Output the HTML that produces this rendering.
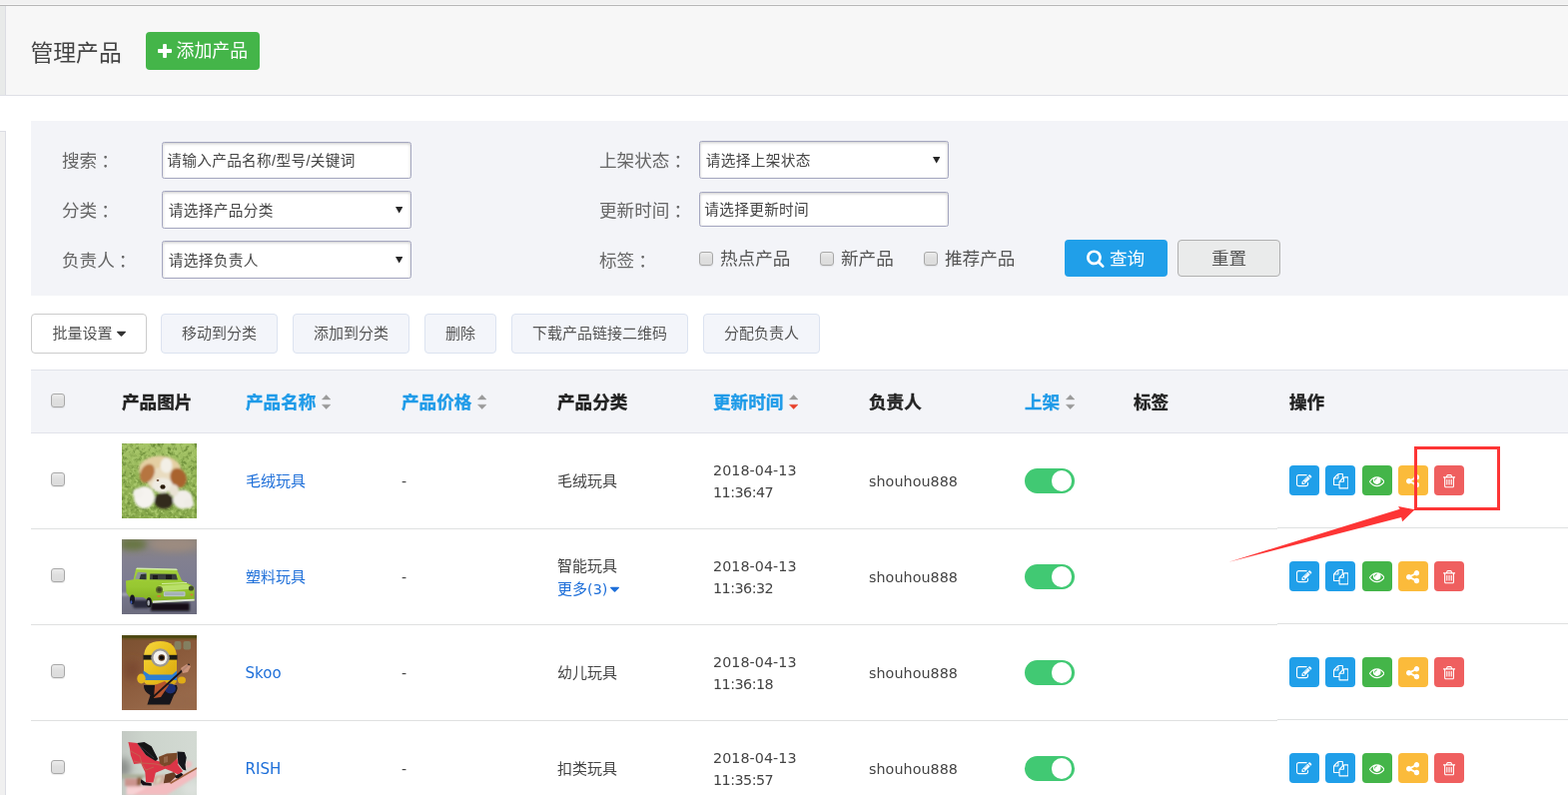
<!DOCTYPE html>
<html lang="zh-CN">
<head>
<meta charset="utf-8">
<title>管理产品</title>
<style>
*{box-sizing:border-box;margin:0;padding:0}
html,body{width:1570px;height:796px;overflow:hidden;background:#fff}
body{position:relative;will-change:transform;font-family:"Liberation Sans","Noto Sans CJK SC",sans-serif;color:#444;font-size:15px}
.abs{position:absolute}
svg{display:block}
/* chrome strips */
#topstrip{left:0;top:0;width:1570px;height:6px;background:linear-gradient(#f1f1f1 0,#f1f1f1 3.8px,#f7f7f7 3.8px,#f7f7f7 4.6px,#b7b7b7 4.8px,#b7b7b7 5.7px,#e4e4e4 6px)}
#lstrip1{left:0;top:6px;width:6px;height:89px;background:#e8eae9;border-right:1px solid #dcdde3}
#header{left:6px;top:6px;width:1564px;height:89px;background:#f7f7f7}
#hline{left:0;top:95px;width:1570px;height:1px;background:#dfe0e6}
#lstrip2{left:0;top:131px;width:6px;height:665px;background:#f0f0f0;border-right:1px solid #dcdde4;border-top:1px solid #dcdde4}
#title{left:30.5px;top:36.5px;font-size:22.8px;line-height:32px;color:#444;white-space:nowrap;font-weight:400}
#addbtn{left:146px;top:32px;width:114px;height:38px;background:#44b549;border-radius:4px;color:#fff;font-size:17.6px;line-height:38px;white-space:nowrap}
#addbtn svg{position:absolute;left:12px;top:9.5px}
#addbtn span{position:absolute;left:30.5px;top:0;font-size:17.9px}
/* filter */
#filter{left:31px;top:121px;width:1539px;height:175px;background:#f3f4f8}
.lab{font-size:17.6px;line-height:24px;color:#666;white-space:nowrap}
.inp{background:#fff;border:1px solid #a5a7c0;border-radius:2.5px;box-shadow:inset 0 1px 3px rgba(0,0,0,.22);font-size:14.67px;letter-spacing:.33px;color:#444;white-space:nowrap;padding-left:4.2px;padding-top:.8px}
.sel{background:#fff;border:1px solid #a5a7c0;border-radius:2.5px;box-shadow:inset 0 1px 3px rgba(0,0,0,.22);font-size:14.67px;letter-spacing:.33px;color:#444;white-space:nowrap;padding-left:5.8px;padding-top:.8px}
.sel svg{position:absolute;left:232.7px;top:15px}
.cn{position:relative;left:4px}
.cb{width:14px;height:14px;border:1px solid #a8a8a8;border-radius:3px;background:linear-gradient(#ececec,#dfdfdf 45%,#dcdcdc);box-shadow:0 1px 1px rgba(0,0,0,.08)}
.cblab{font-size:17.6px;line-height:24px;color:#555;white-space:nowrap}
#qbtn{left:1066px;top:240px;width:103px;height:37px;background:#209fe9;border-radius:4px;color:#fff;font-size:17.6px;line-height:37px}
#rbtn{left:1179px;top:240px;width:103px;height:37px;background:#eaebeb;border:1px solid #b0b0b0;border-radius:4px;color:#555;font-size:17.6px;line-height:37px;text-align:center}
/* toolbar */
.tb{top:314px;height:40px;border:1px solid #dce3f0;border-radius:4px;background:#f3f5fa;color:#555;font-size:15px;line-height:38px;text-align:center;white-space:nowrap}
.tb.w{background:#fff;border-color:#ccc}
/* table */
#thead{left:31px;top:370px;width:1539px;height:64px;background:#f3f4f8;border-top:1px solid #e1e3ea;border-bottom:1px solid #e1e3ea}
.th{top:390px;font-size:17.6px;line-height:26px;font-weight:700;color:#222;white-space:nowrap;-webkit-text-stroke:.35px currentColor}
.th.b{color:#1f9be8}
.sort{top:395px}
.rowline{left:31px;width:1539px;height:1px;background:#dfe1e1}
.td{font-size:15px;line-height:22px;color:#444;white-space:nowrap}
.lat{font-family:"DejaVu Sans","Noto Sans CJK SC",sans-serif;font-size:14.3px;letter-spacing:.05px;color:#444}
a.lk{color:#1e6fd9;text-decoration:none}
.sw{width:50px;height:25px;border-radius:13px;background:#41c973}
.sw b{position:absolute;right:2.6px;top:2.3px;width:20.5px;height:20.5px;border-radius:50%;background:#fff}
.ab{width:30px;height:30px;border-radius:4px}
.ab svg{position:absolute}
.c1{background:#209fe9}.c3{background:#44b549}.c4{background:#fbbb3b}.c5{background:#ef5f5f}
</style>
</head>
<body>
<div id="topstrip" class="abs"></div>
<div id="lstrip1" class="abs"></div>
<div id="header" class="abs"></div>
<div id="hline" class="abs"></div>
<div id="lstrip2" class="abs"></div>
<h1 id="title" class="abs">管理产品</h1>
<div id="addbtn" class="abs"><svg width="14" height="18" viewBox="0 0 1408 1792"><path fill="#fff" d="M1408 800v192q0 40-28 68t-68 28h-416v416q0 40-28 68t-68 28h-192q-40 0-68-28t-28-68v-416h-416q-40 0-68-28t-28-68v-192q0-40 28-68t68-28h416v-416q0-40 28-68t68-28h192q40 0 68 28t28 68v416h416q40 0 68 28t28 68z"/></svg><span>添加产品</span></div>

<div id="filter" class="abs"></div>
<div class="abs lab" style="left:62px;top:149px">搜索<span class="cn">：</span></div>
<div class="abs lab" style="left:62px;top:199px">分类<span class="cn">：</span></div>
<div class="abs lab" style="left:62px;top:249px">负责人<span class="cn">：</span></div>
<div class="abs inp" style="left:162px;top:142px;width:250px;height:37px;line-height:35px">请输入产品名称/型号/关键词</div>
<div class="abs sel" style="left:162px;top:191px;width:250px;height:38px;line-height:36px">请选择产品分类<svg width="7.4" height="6.6" viewBox="0 0 7.4 6.6"><path fill="#262626" d="M0 0h7.4L3.700 6.600z"/></svg></div>
<div class="abs sel" style="left:162px;top:241px;width:250px;height:38px;line-height:36px">请选择负责人<svg width="7.4" height="6.6" viewBox="0 0 7.4 6.6"><path fill="#262626" d="M0 0h7.4L3.700 6.600z"/></svg></div>
<div class="abs lab" style="left:600px;top:149px">上架状态<span class="cn">：</span></div>
<div class="abs lab" style="left:600px;top:199px">更新时间<span class="cn">：</span></div>
<div class="abs lab" style="left:600px;top:249px">标签<span class="cn">：</span></div>
<div class="abs sel" style="left:700px;top:141px;width:250px;height:38px;line-height:36px">请选择上架状态<svg width="7.4" height="6.6" viewBox="0 0 7.4 6.6"><path fill="#262626" d="M0 0h7.4L3.700 6.600z"/></svg></div>
<div class="abs inp" style="left:700px;top:192px;width:250px;height:35px;line-height:33px">请选择更新时间</div>
<div class="abs cb" style="left:700px;top:252px"></div><div class="abs cblab" style="left:721px;top:247px">热点产品</div>
<div class="abs cb" style="left:821px;top:252px"></div><div class="abs cblab" style="left:842px;top:247px">新产品</div>
<div class="abs cb" style="left:925px;top:252px"></div><div class="abs cblab" style="left:946px;top:247px">推荐产品</div>
<div id="qbtn" class="abs"><svg class="abs" style="left:22px;top:8.5px" width="17.6" height="19" viewBox="0 0 1664 1792"><path fill="#fff" d="M1152 832q0-185-131.500-316.500t-316.500-131.500-316.500 131.500-131.500 316.500 131.500 316.500 316.500 131.500 316.500-131.500 131.500-316.500zM1664 1664q0 52-38 90t-90 38q-54 0-90-38l-343-342q-179 124-399 124-143 0-273.500-55.500t-225-150-150-225-55.500-273.500 55.500-273.500 150-225 225-150 273.500-55.500 273.500 55.500 225 150 150 225 55.500 273.500q0 220-124 399l343 343q37 37 37 90z"/></svg><span class="abs" style="left:45px;top:.5px">查询</span></div>
<div id="rbtn" class="abs">重置</div>

<div class="abs tb w" style="left:31px;width:116px">批量设置<svg style="display:inline-block;vertical-align:middle;margin-left:4px;margin-top:-3px" width="9" height="16" viewBox="0 0 1024 1792"><path fill="#333" d="M1024 704q0 26-19 45l-448 448q-19 19-45 19t-45-19l-448-448q-19-19-19-45t19-45 45-19h896q26 0 45 19t19 45z"/></svg></div>
<div class="abs tb" style="left:161px;width:117px">移动到分类</div>
<div class="abs tb" style="left:293px;width:117px">添加到分类</div>
<div class="abs tb" style="left:425px;width:72px">删除</div>
<div class="abs tb" style="left:512px;width:177px">下载产品链接二维码</div>
<div class="abs tb" style="left:704px;width:117px">分配负责人</div>

<!--TABLE-->
<!--TSTART-->
<div id="thead" class="abs"></div>
<div class="abs cb" style="left:51px;top:394px"></div>
<div class="abs th" style="left:122px">产品图片</div>
<div class="abs th b" style="left:246px">产品名称</div>
<svg class="abs" style="left:321.8px;top:395px" width="9.4" height="15" viewBox="0 0 9.4 15"><path fill="#9a9a9a" stroke="#9a9a9a" stroke-width=".5" stroke-linejoin="round" d="M.5 4.900L4.700.500l4.200 4.400z"/><path fill="#9a9a9a" stroke="#9a9a9a" stroke-width=".5" stroke-linejoin="round" d="M.5 10.200l4.200 4.400 4.200-4.400z"/></svg>
<div class="abs th b" style="left:402px">产品价格</div>
<svg class="abs" style="left:477.8px;top:395px" width="9.4" height="15" viewBox="0 0 9.4 15"><path fill="#9a9a9a" stroke="#9a9a9a" stroke-width=".5" stroke-linejoin="round" d="M.5 4.900L4.700.500l4.200 4.400z"/><path fill="#9a9a9a" stroke="#9a9a9a" stroke-width=".5" stroke-linejoin="round" d="M.5 10.200l4.200 4.400 4.200-4.400z"/></svg>
<div class="abs th" style="left:558px">产品分类</div>
<div class="abs th b" style="left:714px">更新时间</div>
<svg class="abs" style="left:789.8px;top:395px" width="9.4" height="15" viewBox="0 0 9.4 15"><path fill="#9a9a9a" stroke="#9a9a9a" stroke-width=".5" stroke-linejoin="round" d="M.5 4.900L4.700.500l4.200 4.400z"/><path fill="#e8402a" stroke="#e8402a" stroke-width=".5" stroke-linejoin="round" d="M.5 10.200l4.200 4.400 4.200-4.400z"/></svg>
<div class="abs th" style="left:870px">负责人</div>
<div class="abs th b" style="left:1026px">上架</div>
<svg class="abs" style="left:1066.8px;top:395px" width="9.4" height="15" viewBox="0 0 9.4 15"><path fill="#9a9a9a" stroke="#9a9a9a" stroke-width=".5" stroke-linejoin="round" d="M.5 4.900L4.700.500l4.200 4.400z"/><path fill="#9a9a9a" stroke="#9a9a9a" stroke-width=".5" stroke-linejoin="round" d="M.5 10.200l4.200 4.400 4.200-4.400z"/></svg>
<div class="abs th" style="left:1135px">标签</div>
<div class="abs th" style="left:1291px">操作</div>
<div class="abs cb" style="left:51px;top:473.4px"></div>
<!--IMG0--><!--IS--><svg class="abs" style="left:122px;top:444px" width="75" height="75" viewBox="0 0 75 75"><defs><filter id="b1" x="-20%" y="-20%" width="140%" height="140%"><feGaussianBlur stdDeviation="0.9"/></filter><filter id="b2" x="-20%" y="-20%" width="140%" height="140%"><feGaussianBlur stdDeviation="0.6"/></filter><filter id="gn" color-interpolation-filters="sRGB" x="0" y="0" width="100%" height="100%"><feTurbulence type="fractalNoise" baseFrequency="0.22" numOctaves="3" seed="7"/><feColorMatrix values="0 0 0 0 0.42  0 0 0 0 0.55  0 0 0 0 0.22  3.4 0 0 0 -1.55"/></filter><filter id="gl" color-interpolation-filters="sRGB" x="0" y="0" width="100%" height="100%"><feTurbulence type="fractalNoise" baseFrequency="0.3" numOctaves="2" seed="21"/><feColorMatrix values="0 0 0 0 0.66  0 0 0 0 0.78  0 0 0 0 0.42  0 4 0 0 -1.9"/></filter><linearGradient id="gg" x1="0" y1="0" x2="0" y2="1"><stop offset="0" stop-color="#a6c568"/><stop offset=".45" stop-color="#93b456"/><stop offset="1" stop-color="#88aa4c"/></linearGradient><clipPath id="cp1"><rect width="75" height="75"/></clipPath></defs>
<g clip-path="url(#cp1)"><rect width="75" height="75" fill="url(#gg)"/><rect width="75" height="75" filter="url(#gn)"/><rect width="75" height="75" filter="url(#gl)"/>
<g filter="url(#b1)"><ellipse cx="42" cy="57.5" rx="9.5" ry="8" fill="#332a1b"/><ellipse cx="38" cy="26" rx="21" ry="13.5" fill="#e4cfa3"/><ellipse cx="40" cy="36" rx="15" ry="12" fill="#e9dcc0"/><ellipse cx="44.5" cy="22" rx="6" ry="7.5" fill="#f3efe6"/><ellipse cx="25.5" cy="30" rx="6.8" ry="9.8" fill="#b6743f" transform="rotate(25 25.5 30)"/><ellipse cx="56.5" cy="34.5" rx="8" ry="10" fill="#a9642f" transform="rotate(-20 56.5 34.5)"/><ellipse cx="40.5" cy="42" rx="10.5" ry="7.5" fill="#efebe2"/><ellipse cx="22.5" cy="54" rx="10.5" ry="11" fill="#f5f3ef"/><ellipse cx="16" cy="50" rx="5" ry="5" fill="#f3f1ec"/><ellipse cx="61" cy="56" rx="10" ry="9.5" fill="#f1eee9"/><ellipse cx="67" cy="60" rx="5" ry="5" fill="#efece6"/><ellipse cx="52" cy="47" rx="5" ry="6" fill="#e9e2d4"/></g>
<g filter="url(#b2)"><ellipse cx="41" cy="43.5" rx="2.6" ry="2.2" fill="#2b1a10"/><ellipse cx="36" cy="37" rx="1.3" ry="1" fill="#6b4a30"/></g></g></svg><!--IE-->
<a class="abs td lk" style="left:246px;top:470.5px">毛绒玩具</a>
<div class="abs td lat" style="left:402px;top:470.5px">-</div>
<div class="abs td" style="left:558px;top:470.5px">毛绒玩具</div>
<div class="abs td lat" style="left:714px;top:459.5px">2018-04-13<br><span style="letter-spacing:-.5px">11:36:47</span></div>
<div class="abs td lat" style="left:870px;top:470.5px">shouhou888</div>
<div class="abs sw" style="left:1026px;top:469px"><b></b></div>
<div class="abs ab c1" style="left:1291.0px;top:466px"><svg style="left:7.30px;top:8.30px" width="15.40" height="15.4" viewBox="0 0 1792 1792"><path fill="#fff" d="M888 1184l116-116-152-152-116 116v56h96v96h56zM1328 464q-16-16-33 1l-350 350q-17 17-1 33t33-1l350-350q17-17 1-33zM1408 1058v190q0 119-84.500 203.500t-203.500 84.500h-832q-119 0-203.500-84.500t-84.500-203.500v-832q0-119 84.500-203.500t203.500-84.500h832q63 0 117 25 15 7 18 23 3 17-9 29l-49 49q-14 14-32 8-23-6-45-6h-832q-66 0-113 47t-47 113v832q0 66 47 113t113 47h832q66 0 113-47t47-113v-126q0-13 9-22l64-64q15-15 35-7t20 29zM1312 320l288 288-672 672h-288v-288zM1756 452l-92 92-288-288 92-92q28-28 68-28t68 28l152 152q28 28 28 68t-28 68z"/></svg></div>
<div class="abs ab c1" style="left:1327.3px;top:466px"><svg style="left:7.30px;top:8.30px" width="15.40" height="15.4" viewBox="0 0 1792 1792"><path fill="#fff" d="M1696 384q40 0 68 28t28 68v1216q0 40-28 68t-68 28h-960q-40 0-68-28t-28-68v-288h-544q-40 0-68-28t-28-68v-672q0-40 20-88t48-76l408-408q28-28 76-48t88-20h416q40 0 68 28t28 68v328q68-40 128-40h416zM1152 597l-299 299h299v-299zM512 213l-299 299h299v-299zM708 860l316-316v-416h-384v416q0 40-28 68t-68 28h-416v640h512v-256q0-40 20-88t48-76zM1664 1664v-1152h-384v416q0 40-28 68t-68 28h-416v640h896z"/></svg></div>
<div class="abs ab c3" style="left:1363.6px;top:466px"><svg style="left:7.30px;top:8.30px" width="15.40" height="15.4" viewBox="0 0 1792 1792"><path fill="#fff" d="M1664 960q-152-236-381-353 61 104 61 225 0 185-131.500 316.500t-316.500 131.500-316.500-131.500-131.500-316.500q0-121 61-225-229 117-381 353 133 205 333.500 326.500t434.500 121.500 434.500-121.500 333.500-326.500zM944 576q0-20-14-34t-34-14q-125 0-214.500 89.500t-89.500 214.500q0 20 14 34t34 14 34-14 14-34q0-86 61-147t147-61q20 0 34-14t14-34zM1792 960q0 34-20 69-140 230-376.500 368.500t-499.500 138.500-499.500-139-376.500-368q-20-35-20-69t20-69q140-229 376.500-368t499.500-139 499.500 139 376.500 368q20 35 20 69z"/></svg></div>
<div class="abs ab c4" style="left:1399.9px;top:466px"><svg style="left:8.40px;top:8.30px" width="13.20" height="15.4" viewBox="0 0 1536 1792"><path fill="#fff" d="M1216 1024q133 0 226.500 93.500t93.500 226.500-93.500 226.500-226.500 93.500-226.500-93.500-93.500-226.500q0-12 2-34l-360-180q-92 86-218 86-133 0-226.500-93.500t-93.500-226.500 93.500-226.500 226.500-93.500q126 0 218 86l360-180q-2-22-2-34 0-133 93.500-226.500t226.500-93.500 226.500 93.500 93.500 226.500-93.500 226.500-226.500 93.500q-126 0-218-86l-360 180q2 22 2 34t-2 34l360 180q92-86 218-86z"/></svg></div>
<div class="abs ab c5" style="left:1436.2px;top:466px"><svg style="left:8.95px;top:8.30px" width="12.10" height="15.4" viewBox="0 0 1408 1792"><path fill="#fff" d="M512 736v576q0 14-9 23t-23 9h-64q-14 0-23-9t-9-23v-576q0-14 9-23t23-9h64q14 0 23 9t9 23zM768 736v576q0 14-9 23t-23 9h-64q-14 0-23-9t-9-23v-576q0-14 9-23t23-9h64q14 0 23 9t9 23zM1024 736v576q0 14-9 23t-23 9h-64q-14 0-23-9t-9-23v-576q0-14 9-23t23-9h64q14 0 23 9t9 23zM1152 1460v-948h-896v948q0 22 7 40.500t14.500 27 10.500 8.500h832q3 0 10.500-8.500t14.500-27 7-40.500zM480 384h448l-48-117q-7-9-17-11h-317q-10 2-17 11zM1408 416v64q0 14-9 23t-23 9h-96v948q0 83-47 143.500t-113 60.500h-832q-66 0-113-58.500t-47-141.500v-952h-96q-14 0-23-9t-9-23v-64q0-14 9-23t23-9h309l70-167q15-37 54-63t79-26h320q40 0 79 26t54 63l70 167h309q14 0 23 9t9 23z"/></svg></div>
<div class="abs rowline" style="top:529px;width:1248px"></div><div class="abs rowline" style="top:528px;left:1279px;width:291px"></div>
<div class="abs cb" style="left:51px;top:569.4px"></div>
<!--IMG1--><!--IS--><svg class="abs" style="left:122px;top:540px" width="75" height="75" viewBox="0 0 75 75"><defs><filter id="c1" x="-20%" y="-20%" width="140%" height="140%"><feGaussianBlur stdDeviation="0.6"/></filter><filter id="c2" x="-30%" y="-30%" width="160%" height="160%"><feGaussianBlur stdDeviation="3"/></filter><filter id="c3" x="-30%" y="-30%" width="160%" height="160%"><feGaussianBlur stdDeviation="0.9"/></filter><linearGradient id="cg" x1="0" y1="0" x2="0" y2="1"><stop offset="0" stop-color="#8c857b"/><stop offset=".28" stop-color="#828090"/><stop offset=".6" stop-color="#7c7c92"/><stop offset="1" stop-color="#6c6c7e"/></linearGradient><linearGradient id="cb" x1="0" y1="0" x2="0" y2="1"><stop offset="0" stop-color="#a3d03c"/><stop offset=".55" stop-color="#97c730"/><stop offset="1" stop-color="#80ae22"/></linearGradient><clipPath id="cp2"><rect width="75" height="75"/></clipPath></defs>
<g clip-path="url(#cp2)"><rect width="75" height="75" fill="url(#cg)"/><g filter="url(#c2)"><ellipse cx="11" cy="5" rx="14" ry="6" fill="#687643"/><ellipse cx="52" cy="5" rx="24" ry="7" fill="#9c8b80"/></g>
<g filter="url(#c3)"><path d="M28.900 63.600h38.900v8.100h-38.900z" fill="#141117"/><path d="M9 61h17l1 8h-15z" fill="#2c2c3a"/><ellipse cx="3" cy="55" rx="4" ry="1.500" fill="#b9bcc8" opacity=".7"/></g>
<g filter="url(#c1)">
<path d="M14.300 29l40.500 1 5.400 11.400 5.400 2.700q7 2.500 7 5.900v11.400l-41.600 2-3.800-3.600h-3l-3-1.800-13.700-.3-3-4.300-.5-12 7.600-1.100z" fill="url(#cb)"/>
<path d="M15 28.600l39.500 1q1 .3 1.200 1.400l-41.500-1z" fill="#d2ecac"/>
<path d="M37 46.500l28-1.800q5 2 7 4.800l-34.500 2.700z" fill="#b9e068"/><path d="M40 44.500l25-1" stroke="#d6efa6" stroke-width="1" fill="none"/>
<path d="M28.300 34.400l26 .3 1.600 5.700-27.900-.2z" fill="#3a403e"/><path d="M31 36h5v4h-5zM44 35.500h6v4.500h-6z" fill="#1c1f1f"/>
<path d="M15.900 32.800l8.600.5v7l-11.300-.5z" fill="#8e959a"/><path d="M19 35l5.500-.5v5.800l-7-.3z" fill="#2f3534"/><path d="M25.300 33h1.900v8h-1.900z" fill="#a4d13c"/>
<rect x="41.800" y="52.200" width="21.700" height="5" rx="1.200" fill="#b8c4c6"/><rect x="43" y="53.300" width="19.300" height="2.800" rx=".8" fill="#a4b0b6"/>
<circle cx="37.500" cy="50.600" r="3.500" fill="#5b6a2c"/><circle cx="37.500" cy="50.600" r="2" fill="#3c4526"/><circle cx="69.400" cy="49" r="2.600" fill="#3e482a"/>
<path d="M31 61.600l41.600-1.900v1.900l-41.600 2.100z" fill="#dfe3dc"/><rect x="35.500" y="56" width="3.300" height="1.700" fill="#d9743a"/><rect x="68.500" y="54.600" width="2.600" height="1.700" fill="#d9743a"/>
<ellipse cx="27.200" cy="63.200" rx="2.700" ry="5" fill="#14141b"/><ellipse cx="26.700" cy="63.600" rx="1.300" ry="2.800" fill="#a4a8b0"/><ellipse cx="10.500" cy="60.200" rx="2.500" ry="4.800" fill="#181824"/><ellipse cx="9.500" cy="63" rx=".9" ry="1.800" fill="#3a5ab8"/></g></g></svg><!--IE-->
<a class="abs td lk" style="left:246px;top:566.5px">塑料玩具</a>
<div class="abs td lat" style="left:402px;top:566.5px">-</div>
<div class="abs td" style="left:558px;top:556.0px">智能玩具</div>
<a class="abs td lk" style="left:558px;top:578.5px">更多<span class="lat" style="color:inherit">(3)</span><svg style="display:inline-block;vertical-align:middle;margin-left:3px;margin-top:-1px" width="9" height="16" viewBox="0 0 1024 1792"><path fill="#1e6fd9" d="M1024 704q0 26-19 45l-448 448q-19 19-45 19t-45-19l-448-448q-19-19-19-45t19-45 45-19h896q26 0 45 19t19 45z"/></svg></a>
<div class="abs td lat" style="left:714px;top:555.5px">2018-04-13<br><span style="letter-spacing:-.5px">11:36:32</span></div>
<div class="abs td lat" style="left:870px;top:566.5px">shouhou888</div>
<div class="abs sw" style="left:1026px;top:565px"><b></b></div>
<div class="abs ab c1" style="left:1291.0px;top:562px"><svg style="left:7.30px;top:8.30px" width="15.40" height="15.4" viewBox="0 0 1792 1792"><path fill="#fff" d="M888 1184l116-116-152-152-116 116v56h96v96h56zM1328 464q-16-16-33 1l-350 350q-17 17-1 33t33-1l350-350q17-17 1-33zM1408 1058v190q0 119-84.500 203.500t-203.500 84.500h-832q-119 0-203.500-84.500t-84.500-203.500v-832q0-119 84.500-203.500t203.500-84.500h832q63 0 117 25 15 7 18 23 3 17-9 29l-49 49q-14 14-32 8-23-6-45-6h-832q-66 0-113 47t-47 113v832q0 66 47 113t113 47h832q66 0 113-47t47-113v-126q0-13 9-22l64-64q15-15 35-7t20 29zM1312 320l288 288-672 672h-288v-288zM1756 452l-92 92-288-288 92-92q28-28 68-28t68 28l152 152q28 28 28 68t-28 68z"/></svg></div>
<div class="abs ab c1" style="left:1327.3px;top:562px"><svg style="left:7.30px;top:8.30px" width="15.40" height="15.4" viewBox="0 0 1792 1792"><path fill="#fff" d="M1696 384q40 0 68 28t28 68v1216q0 40-28 68t-68 28h-960q-40 0-68-28t-28-68v-288h-544q-40 0-68-28t-28-68v-672q0-40 20-88t48-76l408-408q28-28 76-48t88-20h416q40 0 68 28t28 68v328q68-40 128-40h416zM1152 597l-299 299h299v-299zM512 213l-299 299h299v-299zM708 860l316-316v-416h-384v416q0 40-28 68t-68 28h-416v640h512v-256q0-40 20-88t48-76zM1664 1664v-1152h-384v416q0 40-28 68t-68 28h-416v640h896z"/></svg></div>
<div class="abs ab c3" style="left:1363.6px;top:562px"><svg style="left:7.30px;top:8.30px" width="15.40" height="15.4" viewBox="0 0 1792 1792"><path fill="#fff" d="M1664 960q-152-236-381-353 61 104 61 225 0 185-131.500 316.500t-316.500 131.500-316.500-131.500-131.500-316.500q0-121 61-225-229 117-381 353 133 205 333.500 326.500t434.500 121.500 434.500-121.500 333.500-326.500zM944 576q0-20-14-34t-34-14q-125 0-214.500 89.500t-89.500 214.500q0 20 14 34t34 14 34-14 14-34q0-86 61-147t147-61q20 0 34-14t14-34zM1792 960q0 34-20 69-140 230-376.500 368.500t-499.500 138.500-499.500-139-376.500-368q-20-35-20-69t20-69q140-229 376.500-368t499.500-139 499.500 139 376.500 368q20 35 20 69z"/></svg></div>
<div class="abs ab c4" style="left:1399.9px;top:562px"><svg style="left:8.40px;top:8.30px" width="13.20" height="15.4" viewBox="0 0 1536 1792"><path fill="#fff" d="M1216 1024q133 0 226.500 93.500t93.500 226.500-93.500 226.500-226.500 93.500-226.500-93.500-93.500-226.500q0-12 2-34l-360-180q-92 86-218 86-133 0-226.500-93.500t-93.500-226.500 93.500-226.500 226.500-93.500q126 0 218 86l360-180q-2-22-2-34 0-133 93.500-226.500t226.500-93.500 226.500 93.500 93.500 226.500-93.500 226.500-226.500 93.500q-126 0-218-86l-360 180q2 22 2 34t-2 34l360 180q92-86 218-86z"/></svg></div>
<div class="abs ab c5" style="left:1436.2px;top:562px"><svg style="left:8.95px;top:8.30px" width="12.10" height="15.4" viewBox="0 0 1408 1792"><path fill="#fff" d="M512 736v576q0 14-9 23t-23 9h-64q-14 0-23-9t-9-23v-576q0-14 9-23t23-9h64q14 0 23 9t9 23zM768 736v576q0 14-9 23t-23 9h-64q-14 0-23-9t-9-23v-576q0-14 9-23t23-9h64q14 0 23 9t9 23zM1024 736v576q0 14-9 23t-23 9h-64q-14 0-23-9t-9-23v-576q0-14 9-23t23-9h64q14 0 23 9t9 23zM1152 1460v-948h-896v948q0 22 7 40.500t14.500 27 10.500 8.500h832q3 0 10.500-8.500t14.500-27 7-40.500zM480 384h448l-48-117q-7-9-17-11h-317q-10 2-17 11zM1408 416v64q0 14-9 23t-23 9h-96v948q0 83-47 143.500t-113 60.500h-832q-66 0-113-58.500t-47-141.500v-952h-96q-14 0-23-9t-9-23v-64q0-14 9-23t23-9h309l70-167q15-37 54-63t79-26h320q40 0 79 26t54 63l70 167h309q14 0 23 9t9 23z"/></svg></div>
<div class="abs rowline" style="top:625px;width:1248px"></div><div class="abs rowline" style="top:624px;left:1279px;width:291px"></div>
<div class="abs cb" style="left:51px;top:665.4px"></div>
<!--IMG2--><!--IS--><svg class="abs" style="left:122px;top:636px" width="75" height="75" viewBox="0 0 75 75"><defs><filter id="m1" x="-20%" y="-20%" width="140%" height="140%"><feGaussianBlur stdDeviation="0.6"/></filter><filter id="m2" x="-20%" y="-20%" width="140%" height="140%"><feGaussianBlur stdDeviation="4"/></filter><linearGradient id="mg" x1="0" y1="0" x2=".5" y2="1"><stop offset="0" stop-color="#7a5030"/><stop offset=".5" stop-color="#8a5a3b"/><stop offset="1" stop-color="#98694a"/></linearGradient><linearGradient id="my" x1="0" y1="0" x2="1" y2="1"><stop offset="0" stop-color="#f6d53e"/><stop offset=".5" stop-color="#e9bf1c"/><stop offset="1" stop-color="#d7a715"/></linearGradient><clipPath id="cp3"><rect width="75" height="75"/></clipPath></defs>
<g clip-path="url(#cp3)"><rect width="75" height="75" fill="url(#mg)"/><g filter="url(#m2)"><ellipse cx="10" cy="35" rx="8" ry="10" fill="#7a4a30"/><ellipse cx="55" cy="66" rx="20" ry="7" fill="#95684a"/></g><rect width="75" height="3.200" fill="#4f4a14"/><rect y="3.200" width="75" height="1.500" fill="#6a5220" opacity=".7"/>
<g filter="url(#m1)"><rect x="52.500" y="6" width="7" height="8.500" rx="2" fill="#7f9f80" opacity=".55"/><rect x="61.500" y="6" width="7.500" height="8.500" rx="2" fill="#7f9f80" opacity=".55"/>
<path d="M22 22.500q0-16.500 16.500-16.500t16.500 16.500v22q0 5-5 5h-23q-5 0-5-5z" fill="url(#my)"/>
<rect x="21.500" y="19.800" width="34" height="4.800" fill="#1c1a18"/>
<circle cx="38.500" cy="22.500" r="9.300" fill="#9b9894"/><circle cx="38.500" cy="22.500" r="7" fill="#f4f2ee"/><circle cx="39.800" cy="22.500" r="3.300" fill="#5a3a20"/><circle cx="39.800" cy="22.500" r="2.100" fill="#0c0a0a"/>
<path d="M21.500 35.500l6 4h23l4.500-4v9.500h-33.500z" fill="#2f7fd2"/>
<ellipse cx="19.500" cy="43.500" rx="4.200" ry="5" fill="#e6b61e"/><ellipse cx="60" cy="45" rx="4" ry="3.500" fill="#e0ac18"/>
<path d="M22 50h33q2 5-3 10l-4 9.500h-22.500l3-9.500q-7-4-6.500-10z" fill="#15121a"/><ellipse cx="48.500" cy="53.500" rx="5.500" ry="5" fill="#1f2f72"/>
<path d="M33 50l10-4 4 4-8 12-7 1z" fill="#b5552f"/><path d="M29.500 63.500L67.500 29" stroke="#1c1418" stroke-width="1.700" fill="none"/><path d="M59 33l6-4 4 2-3 6-5 1z" fill="#d9a08a" opacity=".8"/></g></g></svg><!--IE-->
<a class="abs td lk lat" style="left:246px;top:662.5px;font-size:15px;margin-left:-.5px">Skoo</a>
<div class="abs td lat" style="left:402px;top:662.5px">-</div>
<div class="abs td" style="left:558px;top:662.5px">幼儿玩具</div>
<div class="abs td lat" style="left:714px;top:651.5px">2018-04-13<br><span style="letter-spacing:-.5px">11:36:18</span></div>
<div class="abs td lat" style="left:870px;top:662.5px">shouhou888</div>
<div class="abs sw" style="left:1026px;top:661px"><b></b></div>
<div class="abs ab c1" style="left:1291.0px;top:658px"><svg style="left:7.30px;top:8.30px" width="15.40" height="15.4" viewBox="0 0 1792 1792"><path fill="#fff" d="M888 1184l116-116-152-152-116 116v56h96v96h56zM1328 464q-16-16-33 1l-350 350q-17 17-1 33t33-1l350-350q17-17 1-33zM1408 1058v190q0 119-84.500 203.500t-203.500 84.500h-832q-119 0-203.500-84.500t-84.500-203.500v-832q0-119 84.500-203.500t203.500-84.500h832q63 0 117 25 15 7 18 23 3 17-9 29l-49 49q-14 14-32 8-23-6-45-6h-832q-66 0-113 47t-47 113v832q0 66 47 113t113 47h832q66 0 113-47t47-113v-126q0-13 9-22l64-64q15-15 35-7t20 29zM1312 320l288 288-672 672h-288v-288zM1756 452l-92 92-288-288 92-92q28-28 68-28t68 28l152 152q28 28 28 68t-28 68z"/></svg></div>
<div class="abs ab c1" style="left:1327.3px;top:658px"><svg style="left:7.30px;top:8.30px" width="15.40" height="15.4" viewBox="0 0 1792 1792"><path fill="#fff" d="M1696 384q40 0 68 28t28 68v1216q0 40-28 68t-68 28h-960q-40 0-68-28t-28-68v-288h-544q-40 0-68-28t-28-68v-672q0-40 20-88t48-76l408-408q28-28 76-48t88-20h416q40 0 68 28t28 68v328q68-40 128-40h416zM1152 597l-299 299h299v-299zM512 213l-299 299h299v-299zM708 860l316-316v-416h-384v416q0 40-28 68t-68 28h-416v640h512v-256q0-40 20-88t48-76zM1664 1664v-1152h-384v416q0 40-28 68t-68 28h-416v640h896z"/></svg></div>
<div class="abs ab c3" style="left:1363.6px;top:658px"><svg style="left:7.30px;top:8.30px" width="15.40" height="15.4" viewBox="0 0 1792 1792"><path fill="#fff" d="M1664 960q-152-236-381-353 61 104 61 225 0 185-131.500 316.500t-316.500 131.500-316.500-131.500-131.500-316.500q0-121 61-225-229 117-381 353 133 205 333.500 326.500t434.500 121.500 434.500-121.500 333.500-326.500zM944 576q0-20-14-34t-34-14q-125 0-214.500 89.500t-89.500 214.500q0 20 14 34t34 14 34-14 14-34q0-86 61-147t147-61q20 0 34-14t14-34zM1792 960q0 34-20 69-140 230-376.500 368.500t-499.500 138.500-499.500-139-376.500-368q-20-35-20-69t20-69q140-229 376.500-368t499.500-139 499.500 139 376.500 368q20 35 20 69z"/></svg></div>
<div class="abs ab c4" style="left:1399.9px;top:658px"><svg style="left:8.40px;top:8.30px" width="13.20" height="15.4" viewBox="0 0 1536 1792"><path fill="#fff" d="M1216 1024q133 0 226.500 93.500t93.500 226.500-93.500 226.500-226.500 93.500-226.500-93.500-93.500-226.500q0-12 2-34l-360-180q-92 86-218 86-133 0-226.500-93.500t-93.500-226.500 93.500-226.500 226.500-93.500q126 0 218 86l360-180q-2-22-2-34 0-133 93.500-226.500t226.500-93.500 226.500 93.500 93.500 226.500-93.500 226.500-226.500 93.500q-126 0-218-86l-360 180q2 22 2 34t-2 34l360 180q92-86 218-86z"/></svg></div>
<div class="abs ab c5" style="left:1436.2px;top:658px"><svg style="left:8.95px;top:8.30px" width="12.10" height="15.4" viewBox="0 0 1408 1792"><path fill="#fff" d="M512 736v576q0 14-9 23t-23 9h-64q-14 0-23-9t-9-23v-576q0-14 9-23t23-9h64q14 0 23 9t9 23zM768 736v576q0 14-9 23t-23 9h-64q-14 0-23-9t-9-23v-576q0-14 9-23t23-9h64q14 0 23 9t9 23zM1024 736v576q0 14-9 23t-23 9h-64q-14 0-23-9t-9-23v-576q0-14 9-23t23-9h64q14 0 23 9t9 23zM1152 1460v-948h-896v948q0 22 7 40.500t14.500 27 10.500 8.500h832q3 0 10.500-8.500t14.500-27 7-40.500zM480 384h448l-48-117q-7-9-17-11h-317q-10 2-17 11zM1408 416v64q0 14-9 23t-23 9h-96v948q0 83-47 143.500t-113 60.500h-832q-66 0-113-58.500t-47-141.500v-952h-96q-14 0-23-9t-9-23v-64q0-14 9-23t23-9h309l70-167q15-37 54-63t79-26h320q40 0 79 26t54 63l70 167h309q14 0 23 9t9 23z"/></svg></div>
<div class="abs rowline" style="top:721px;width:1248px"></div><div class="abs rowline" style="top:720px;left:1279px;width:291px"></div>
<div class="abs cb" style="left:51px;top:761.4px"></div>
<!--IMG3--><!--IS--><svg class="abs" style="left:122px;top:732px" width="75" height="64" viewBox="0 0 75 64"><defs><filter id="h1" x="-20%" y="-20%" width="140%" height="140%"><feGaussianBlur stdDeviation="0.55"/></filter><filter id="h2" x="-30%" y="-30%" width="160%" height="160%"><feGaussianBlur stdDeviation="3.5"/></filter><filter id="h3" x="-20%" y="-20%" width="140%" height="140%"><feGaussianBlur stdDeviation="1.2"/></filter><linearGradient id="hg" x1="0" y1="0" x2="1" y2="0"><stop offset="0" stop-color="#c3c9c3"/><stop offset=".3" stop-color="#ccd4cc"/><stop offset="1" stop-color="#d3dad3"/></linearGradient><clipPath id="cp4"><rect width="75" height="64"/></clipPath></defs>
<g clip-path="url(#cp4)"><rect width="75" height="64" fill="url(#hg)"/><g filter="url(#h2)"><ellipse cx="1" cy="37" rx="8" ry="10" fill="#8d918d"/><ellipse cx="70" cy="58" rx="10" ry="7" fill="#dde1dd"/></g>
<g filter="url(#h3)"><path d="M0 43.400h23.300v3.400h-23.300z" fill="#a9ae98"/><path d="M3 47.500h13.500v7.500h-13.500z" fill="#cb948e"/><path d="M15.500 46.500h4.500l-1 8h-4z" fill="#8a5a3c"/><path d="M32 45l11.500-1.500v9l-12 1.500z" fill="#cdab9c"/><path d="M35 47l5-1-3 6-3 .5z" fill="#d8d3bc"/><path d="M64.300 29.700l5.700 1v5l-5.700 2z" fill="#f0c0c2"/>
<path d="M4.800 55.500l27.400-.8 10-3 32.800-14.900v8.200l-30 19h-40.200z" fill="#f3bcc0"/><path d="M4.800 57l20-.5-14 7.500h-6z" fill="#f7d2d4"/></g>
<g filter="url(#h1)"><path d="M48 51.600l27-15.400v1.800l-26 15z" fill="#a0623f"/><path d="M43.400 43.400l8.900-2.400 2.400 4-6.500 6.400-6.400.9z" fill="#6b3d28"/>
<path d="M6.400 10.900l8.900 1.200 8.800 12 11.300 5.600 2.400.8 7.200 4.100 10.500-7.300.8 6.500 4.800 6.400-4.800 3.200-6.500-3.200-6.400-2.400-9.600 4-2.400 9.600h-7.300l-.8-10.400-3.200-6.400-.8-2.400-7.200.8-3.300-8.900-.8-6.400z" fill="#dc3646"/>
<path d="M15.300 12.100l7.200-1.200 7.200 4.400 4.100 8 2.400 4.800-2.400 2-9.700-6z" fill="#151318"/><path d="M17 14l15 13" stroke="#4a4a50" stroke-width=".6" fill="none"/>
<path d="M37 25.700l8-3.200 10.500-.8v5.600l-7.300 6.500-6.400 1.600-4-3.200z" fill="#7a482a"/><path d="M42 26l4-1v6l-4 1z" fill="#94664a"/>
<path d="M55.500 20.500l7.200.4 2 5.600-1.200 7.300.8 5.600-3.200-.8-4.800-6.400z" fill="#17151a"/>
<path d="M19.300 48.200l4.800 3.200 5.600.9v2.400l-8.800-.4-2-2.900z" fill="#121014"/><path d="M53.100 45l6.400-3.200 2 2-5.200 3.600-2.400-.4z" fill="#141216"/>
<path d="M9 20l9 5 2 8M12 30l8 2 14 1 8 2M20 33l4 6 8-3" stroke="#b0805a" stroke-width=".7" fill="none" opacity=".8"/></g></g></svg><!--IE-->
<a class="abs td lk lat" style="left:246px;top:758.5px;font-size:15px;margin-left:-.5px">RISH</a>
<div class="abs td lat" style="left:402px;top:758.5px">-</div>
<div class="abs td" style="left:558px;top:758.5px">扣类玩具</div>
<div class="abs td lat" style="left:714px;top:747.5px">2018-04-13<br><span style="letter-spacing:-.5px">11:35:57</span></div>
<div class="abs td lat" style="left:870px;top:758.5px">shouhou888</div>
<div class="abs sw" style="left:1026px;top:757px"><b></b></div>
<div class="abs ab c1" style="left:1291.0px;top:754px"><svg style="left:7.30px;top:8.30px" width="15.40" height="15.4" viewBox="0 0 1792 1792"><path fill="#fff" d="M888 1184l116-116-152-152-116 116v56h96v96h56zM1328 464q-16-16-33 1l-350 350q-17 17-1 33t33-1l350-350q17-17 1-33zM1408 1058v190q0 119-84.500 203.500t-203.500 84.500h-832q-119 0-203.500-84.500t-84.500-203.500v-832q0-119 84.500-203.500t203.500-84.500h832q63 0 117 25 15 7 18 23 3 17-9 29l-49 49q-14 14-32 8-23-6-45-6h-832q-66 0-113 47t-47 113v832q0 66 47 113t113 47h832q66 0 113-47t47-113v-126q0-13 9-22l64-64q15-15 35-7t20 29zM1312 320l288 288-672 672h-288v-288zM1756 452l-92 92-288-288 92-92q28-28 68-28t68 28l152 152q28 28 28 68t-28 68z"/></svg></div>
<div class="abs ab c1" style="left:1327.3px;top:754px"><svg style="left:7.30px;top:8.30px" width="15.40" height="15.4" viewBox="0 0 1792 1792"><path fill="#fff" d="M1696 384q40 0 68 28t28 68v1216q0 40-28 68t-68 28h-960q-40 0-68-28t-28-68v-288h-544q-40 0-68-28t-28-68v-672q0-40 20-88t48-76l408-408q28-28 76-48t88-20h416q40 0 68 28t28 68v328q68-40 128-40h416zM1152 597l-299 299h299v-299zM512 213l-299 299h299v-299zM708 860l316-316v-416h-384v416q0 40-28 68t-68 28h-416v640h512v-256q0-40 20-88t48-76zM1664 1664v-1152h-384v416q0 40-28 68t-68 28h-416v640h896z"/></svg></div>
<div class="abs ab c3" style="left:1363.6px;top:754px"><svg style="left:7.30px;top:8.30px" width="15.40" height="15.4" viewBox="0 0 1792 1792"><path fill="#fff" d="M1664 960q-152-236-381-353 61 104 61 225 0 185-131.500 316.500t-316.500 131.500-316.500-131.500-131.500-316.500q0-121 61-225-229 117-381 353 133 205 333.500 326.500t434.500 121.500 434.500-121.500 333.500-326.500zM944 576q0-20-14-34t-34-14q-125 0-214.500 89.500t-89.500 214.500q0 20 14 34t34 14 34-14 14-34q0-86 61-147t147-61q20 0 34-14t14-34zM1792 960q0 34-20 69-140 230-376.500 368.500t-499.500 138.500-499.500-139-376.500-368q-20-35-20-69t20-69q140-229 376.500-368t499.500-139 499.500 139 376.500 368q20 35 20 69z"/></svg></div>
<div class="abs ab c4" style="left:1399.9px;top:754px"><svg style="left:8.40px;top:8.30px" width="13.20" height="15.4" viewBox="0 0 1536 1792"><path fill="#fff" d="M1216 1024q133 0 226.500 93.500t93.500 226.500-93.500 226.500-226.500 93.500-226.500-93.500-93.500-226.500q0-12 2-34l-360-180q-92 86-218 86-133 0-226.500-93.500t-93.500-226.500 93.500-226.500 226.500-93.500q126 0 218 86l360-180q-2-22-2-34 0-133 93.500-226.500t226.500-93.500 226.500 93.500 93.500 226.500-93.500 226.500-226.500 93.500q-126 0-218-86l-360 180q2 22 2 34t-2 34l360 180q92-86 218-86z"/></svg></div>
<div class="abs ab c5" style="left:1436.2px;top:754px"><svg style="left:8.95px;top:8.30px" width="12.10" height="15.4" viewBox="0 0 1408 1792"><path fill="#fff" d="M512 736v576q0 14-9 23t-23 9h-64q-14 0-23-9t-9-23v-576q0-14 9-23t23-9h64q14 0 23 9t9 23zM768 736v576q0 14-9 23t-23 9h-64q-14 0-23-9t-9-23v-576q0-14 9-23t23-9h64q14 0 23 9t9 23zM1024 736v576q0 14-9 23t-23 9h-64q-14 0-23-9t-9-23v-576q0-14 9-23t23-9h64q14 0 23 9t9 23zM1152 1460v-948h-896v948q0 22 7 40.500t14.500 27 10.500 8.500h832q3 0 10.500-8.500t14.500-27 7-40.500zM480 384h448l-48-117q-7-9-17-11h-317q-10 2-17 11zM1408 416v64q0 14-9 23t-23 9h-96v948q0 83-47 143.500t-113 60.500h-832q-66 0-113-58.500t-47-141.500v-952h-96q-14 0-23-9t-9-23v-64q0-14 9-23t23-9h309l70-167q15-37 54-63t79-26h320q40 0 79 26t54 63l70 167h309q14 0 23 9t9 23z"/></svg></div>
<svg class="abs" style="left:0;top:0" width="1570" height="796" viewBox="0 0 1570 796"><rect x="1417.5" y="448.5" width="83" height="61" fill="none" stroke="#fd3535" stroke-width="3"/><polygon points="1230.3,562.7 1401.6,509.8 1400.1,506.9 1416.6,510.3 1404.2,522.2 1403.1,517.9" fill="#fd3535"/></svg>
<!--TEND-->
<!--ANNOT-->
</body>
</html>
